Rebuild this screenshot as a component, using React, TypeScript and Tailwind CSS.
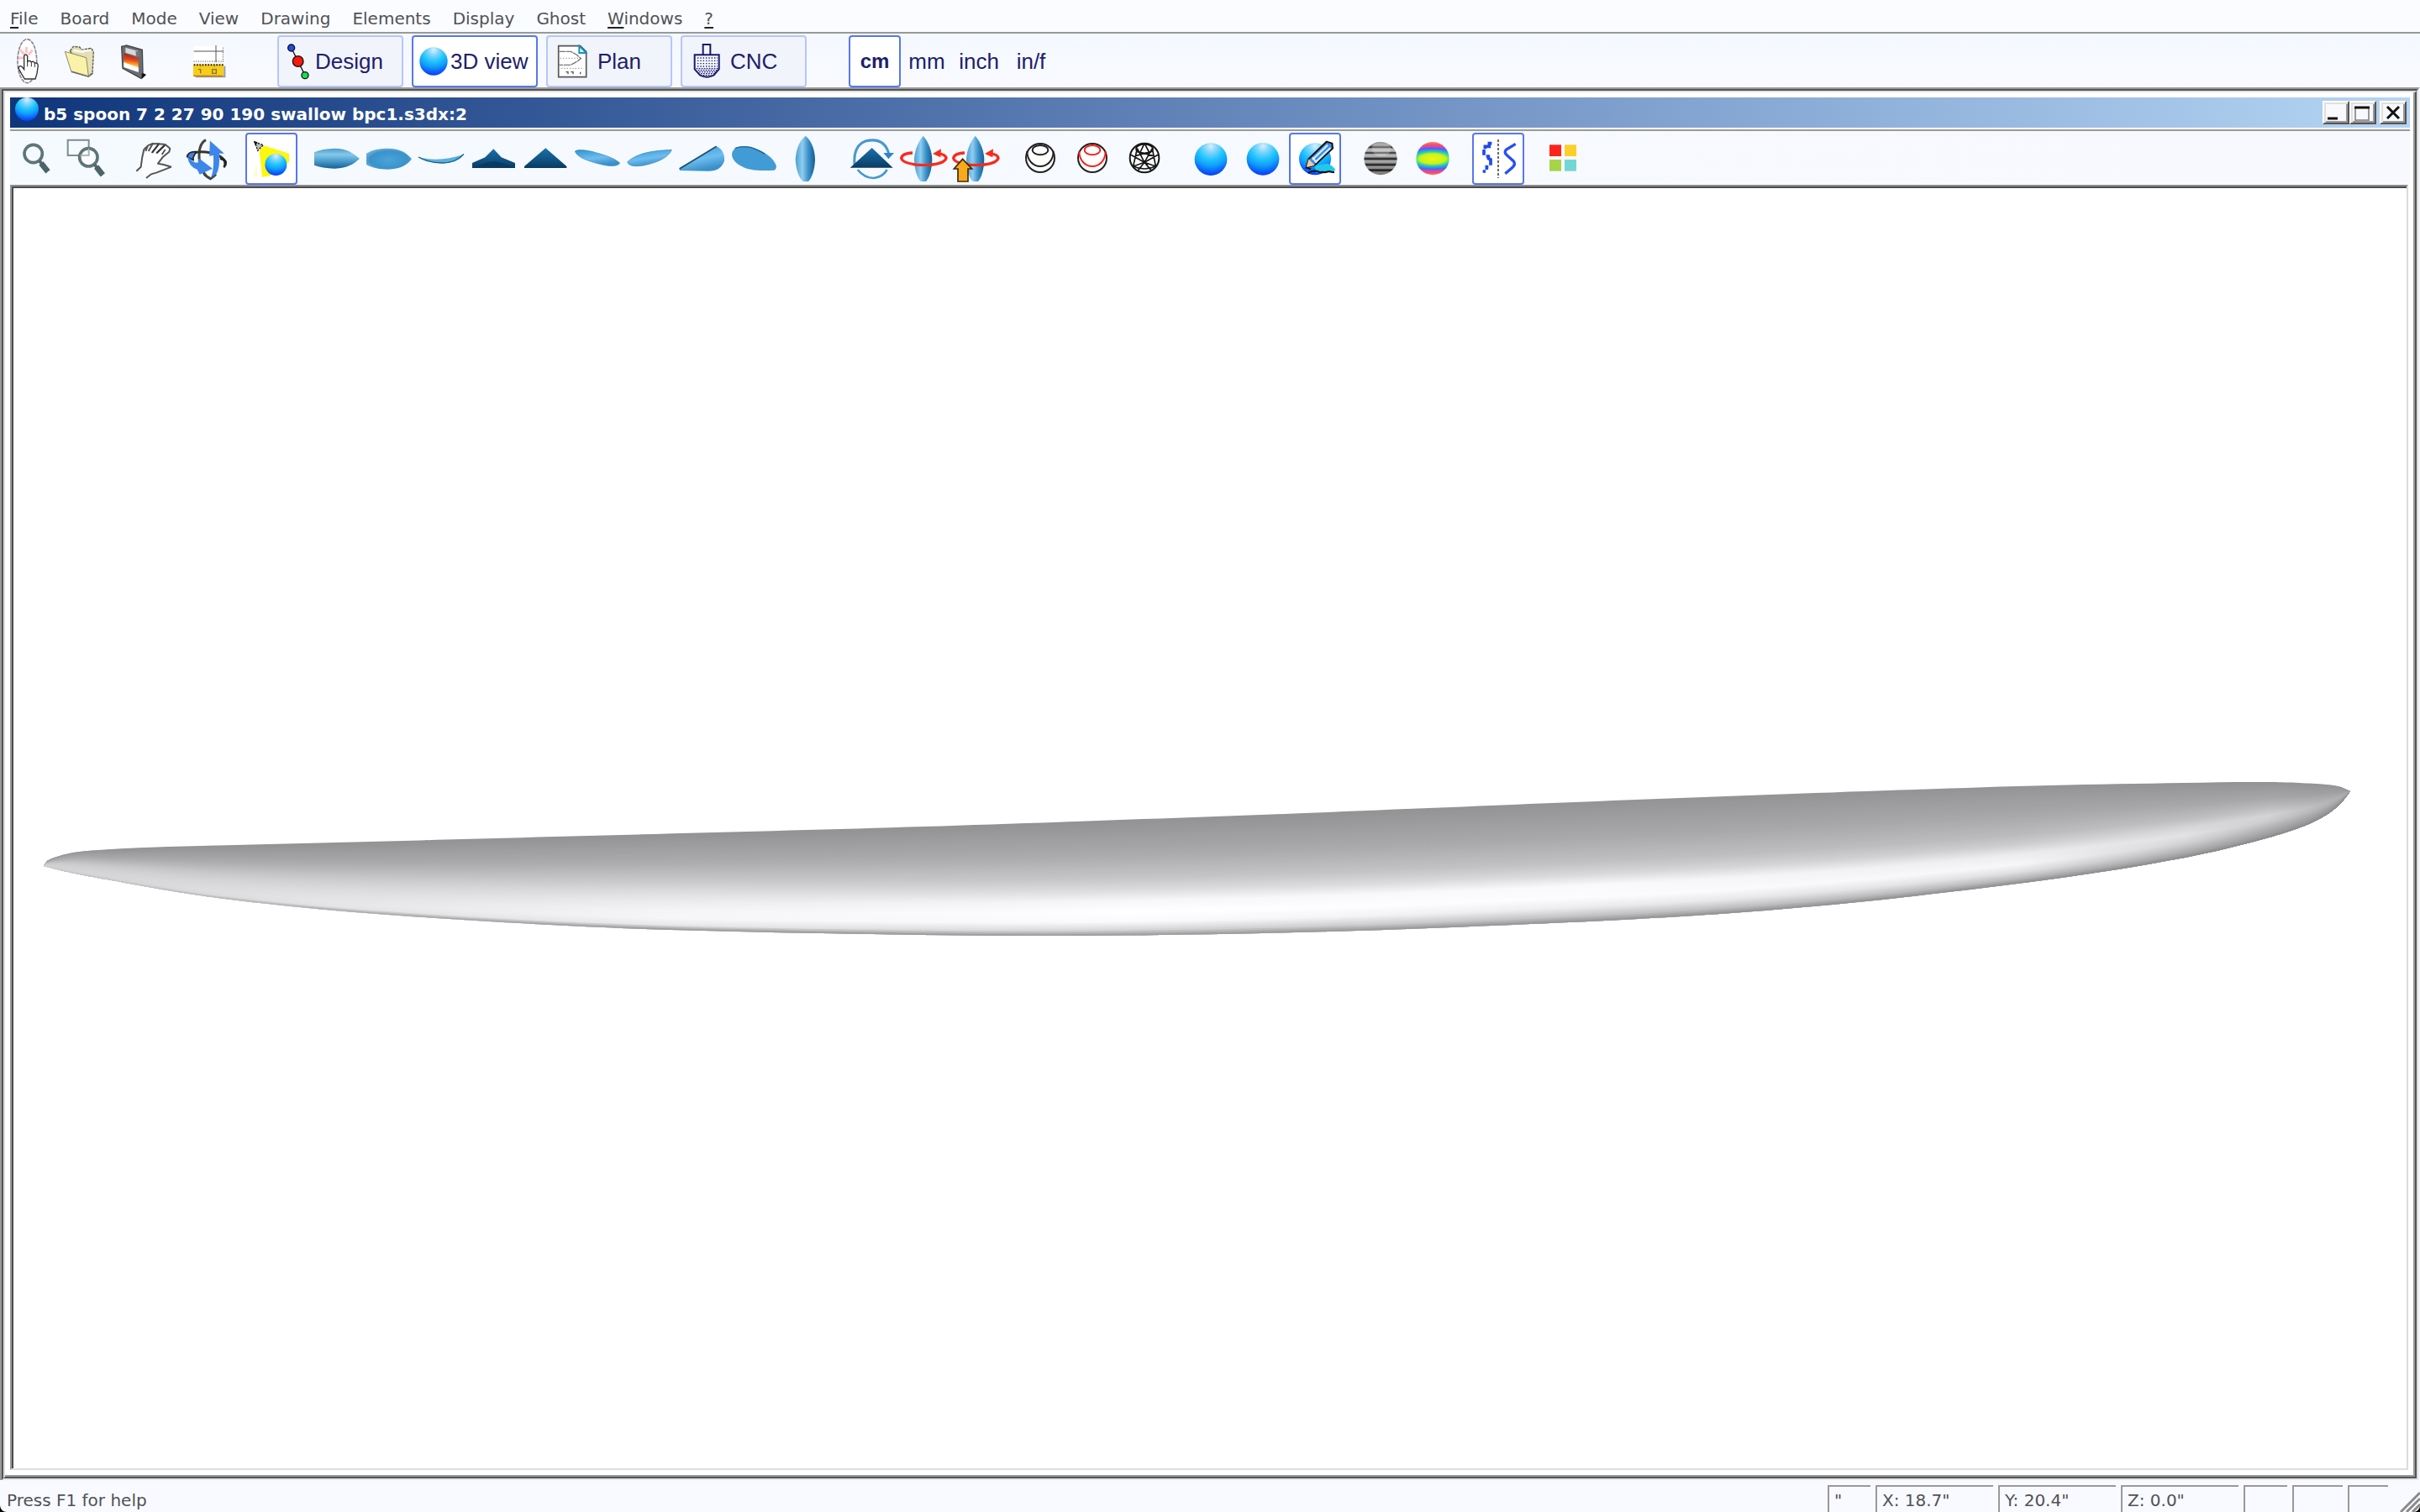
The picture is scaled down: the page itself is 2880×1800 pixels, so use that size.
import type { ReactNode } from 'react';

/* ---------- hull rendering ---------- */

type Pt = [number, number];

const DECK: Pt[] = [
  [52, 1031], [57, 1024], [87, 1015], [133, 1011], [200, 1008], [400, 1003], [700, 995], [1100, 984],
  [1500, 970], [1700, 962], [2000, 950], [2400, 936], [2600, 932], [2700, 931], [2755, 933], [2783, 936], [2797, 942],
];

const BOTTOM: Pt[] = [
  [52, 1031], [60, 1033], [90, 1040], [133, 1048], [200, 1060], [267, 1070], [400, 1084], [600, 1098], [800, 1107],
  [1100, 1113], [1286, 1114], [1500, 1111], [1700, 1105], [2000, 1091], [2200, 1075], [2400, 1052], [2500, 1038],
  [2567, 1027], [2633, 1014], [2700, 997], [2740, 984], [2767, 971], [2785, 957], [2797, 942],
];

// Brightness from the deck (first) down to the bottom rail (last), at several stations along the hull.
const LEVELS = [0, 0.3, 0.5, 0.6, 0.7, 0.8, 0.88, 0.95, 1];
const STATIONS: { x: number; tone: number[] }[] = [
  { x: 52, tone: [150, 180, 200, 205, 208, 210, 210, 205, 190] },
  { x: 133, tone: [146, 170, 195, 204, 210, 213, 214, 212, 190] },
  { x: 400, tone: [146, 170, 198, 210, 220, 227, 230, 228, 165] },
  { x: 800, tone: [146, 172, 202, 220, 235, 245, 246, 232, 145] },
  { x: 1350, tone: [146, 170, 197, 218, 247, 255, 250, 215, 150] },
  { x: 1900, tone: [148, 169, 192, 215, 250, 252, 235, 195, 145] },
  { x: 2400, tone: [148, 168, 187, 205, 236, 247, 225, 185, 140] },
  { x: 2600, tone: [146, 168, 192, 214, 226, 212, 188, 164, 138] },
  { x: 2700, tone: [146, 168, 196, 212, 204, 184, 168, 154, 136] },
  { x: 2797, tone: [148, 158, 168, 170, 166, 158, 150, 144, 138] },
];

function heightAt(line: Pt[], x: number): number {
  const last = line.length - 1;
  let i = 0;
  while (i < last - 1 && x > line[i + 1][0]) i++;
  const slope = (k: number) => {
    const a = line[Math.max(0, k - 1)];
    const b = line[Math.min(last, k + 1)];
    return (b[1] - a[1]) / (b[0] - a[0]);
  };
  const [x0, y0] = line[i];
  const [x1, y1] = line[i + 1];
  const h = x1 - x0;
  const t = Math.min(1, Math.max(0, (x - x0) / h));
  const t2 = t * t;
  const t3 = t2 * t;
  return (
    (2 * t3 - 3 * t2 + 1) * y0 + (t3 - 2 * t2 + t) * h * slope(i) +
    (-2 * t3 + 3 * t2) * y1 + (t3 - t2) * h * slope(i + 1)
  );
}

function toneAt(tone: number[], level: number): number {
  let i = 0;
  while (i < LEVELS.length - 2 && level > LEVELS[i + 1]) i++;
  const f = (level - LEVELS[i]) / (LEVELS[i + 1] - LEVELS[i]);
  return tone[i] + (tone[i + 1] - tone[i]) * f;
}

const XS: number[] = [];
for (let x = 52; x < 2797; x += x < 140 || x > 2680 ? 4 : 20) XS.push(x);
XS.push(2797);

const BANDS = 72;
const UNDERSIDE = [...XS].reverse().map((x) => `${x} ${heightAt(BOTTOM, x).toFixed(1)}`).join('L');

function Hull() {
  const bands = Array.from({ length: BANDS }, (_, i) => i / BANDS);
  return (
    <svg className="block h-full w-full" viewBox="16 224 2848 1524" role="img" aria-label="3D view of the board">
      <defs>
        {bands.map((level, i) => (
          <linearGradient key={i} id={`band${i}`} gradientUnits="userSpaceOnUse" x1="52" x2="2797" y1="0" y2="0">
            {STATIONS.map((s) => {
              const v = Math.round(toneAt(s.tone, level + 0.5 / BANDS));
              return <stop key={s.x} offset={(s.x - 52) / 2745} stopColor={`rgb(${v},${v},${Math.min(255, v + 2)})`} />;
            })}
          </linearGradient>
        ))}
      </defs>
      {bands.map((level, i) => {
        const edge = XS.map((x) => {
          const a = heightAt(DECK, x);
          const b = heightAt(BOTTOM, x);
          return `${x} ${(a + (b - a) * level).toFixed(1)}`;
        }).join('L');
        return <path key={i} d={`M${edge}L${UNDERSIDE}Z`} fill={`url(#band${i})`} />;
      })}
    </svg>
  );
}

/* ---------- icons ---------- */

function Ico({ x, y, children }: { x: number; y: number; children: ReactNode }) {
  return (
    <svg className="size-[62px] shrink-0" viewBox={`${x} ${y} 186 186`} fill="none" aria-hidden="true">
      {children}
    </svg>
  );
}

function SharedPaints() {
  return (
    <svg className="absolute size-0" aria-hidden="true">
      <defs>
        <radialGradient id="ball" cx="0.5" cy="0.1" r="0.92">
          <stop offset="0" stopColor="#d8f0ff" />
          <stop offset="0.2" stopColor="#84d6fc" />
          <stop offset="0.45" stopColor="#20c4fc" />
          <stop offset="0.65" stopColor="#10a0fc" />
          <stop offset="0.85" stopColor="#0a60fb" />
          <stop offset="1" stopColor="#0c34f4" />
        </radialGradient>
        <linearGradient id="boardV" x1="0" y1="0" x2="0" y2="1">
          <stop offset="0" stopColor="#4a9cc8" />
          <stop offset="0.3" stopColor="#86c8ea" />
          <stop offset="0.55" stopColor="#58a8d4" />
          <stop offset="1" stopColor="#14609a" />
        </linearGradient>
        <radialGradient id="boardFlat" cx="0.5" cy="0.55" r="0.6">
          <stop offset="0" stopColor="#4ba3da" />
          <stop offset="0.7" stopColor="#3a92cb" />
          <stop offset="1" stopColor="#7db6dc" />
        </radialGradient>
        <linearGradient id="boardTilt" x1="0" y1="0" x2="0.4" y2="1">
          <stop offset="0" stopColor="#2f93cf" />
          <stop offset="0.6" stopColor="#6dbdf0" />
          <stop offset="1" stopColor="#3a90c8" />
        </linearGradient>
        <linearGradient id="boardH" x1="0" y1="0" x2="1" y2="0">
          <stop offset="0" stopColor="#4d9fd0" />
          <stop offset="0.35" stopColor="#8fcdf2" />
          <stop offset="0.65" stopColor="#3d93c9" />
          <stop offset="1" stopColor="#125d94" />
        </linearGradient>
        <linearGradient id="prow" x1="0" y1="0" x2="0" y2="1">
          <stop offset="0" stopColor="#1a70a8" />
          <stop offset="0.6" stopColor="#0f5283" />
          <stop offset="1" stopColor="#0a3a62" />
        </linearGradient>
        <linearGradient id="zebra" x1="0" y1="0" x2="0" y2="1">
          {[
            [0, '#777'], [0.1, '#999'], [0.16, '#222'], [0.2, '#aaa'], [0.28, '#bbb'], [0.33, '#222'], [0.38, '#bbb'],
            [0.45, '#aaa'], [0.51, '#111'], [0.57, '#aaa'], [0.63, '#999'], [0.69, '#111'], [0.75, '#999'],
            [0.8, '#888'], [0.85, '#111'], [0.92, '#888'], [1, '#777'],
          ].map(([o, c]) => <stop key={o} offset={o} stopColor={String(c)} />)}
        </linearGradient>
        <radialGradient id="rainbow" gradientUnits="userSpaceOnUse" cx="0" cy="0" r="60" gradientTransform="translate(795 267) scale(2.6 1)">
          <stop offset="0" stopColor="#f4f410" />
          <stop offset="0.3" stopColor="#c4f418" />
          <stop offset="0.4" stopColor="#40dc80" />
          <stop offset="0.5" stopColor="#20a8f0" />
          <stop offset="0.62" stopColor="#5060f0" />
          <stop offset="0.72" stopColor="#d048b8" />
          <stop offset="0.82" stopColor="#fa4868" />
          <stop offset="1" stopColor="#fc8468" />
        </radialGradient>
        <linearGradient id="flame" x1="0.2" y1="0" x2="0.1" y2="1">
          <stop offset="0" stopColor="#a02010" />
          <stop offset="0.35" stopColor="#e8481c" />
          <stop offset="0.6" stopColor="#ffb030" />
          <stop offset="0.8" stopColor="#fff" />
        </linearGradient>
      </defs>
    </svg>
  );
}

const Ball = ({ cx, cy, r = 58 }: { cx: number; cy: number; r?: number }) => <circle cx={cx} cy={cy} r={r} fill="url(#ball)" />;

const NewIcon = (
  <Ico x={3} y={126}>
    <ellipse cx="97" cy="218" rx="34" ry="78" fill="#fff" stroke="#8a8a8a" strokeWidth="5" strokeDasharray="14 3" />
    <path d="M94 168V190M72 178L88 196M116 178L102 196M66 208L84 206" stroke="#fbc4c8" strokeWidth="9" />
    <path d="M86 238V200Q92 190 98 200V220Q106 214 112 222Q120 216 124 226Q134 222 136 234L132 262L126 282H88L76 262L66 244Q68 232 78 238L86 248Z" fill="#fff" stroke="#333" strokeWidth="4" />
    <path d="M98 222V238M112 224V238M124 228V240" stroke="#333" strokeWidth="3" />
  </Ico>
);

const OpenIcon = (
  <Ico x={189} y={126}>
    <path d="M250 182L262 166L284 168L292 178L326 172L334 186L330 262L316 270Z" fill="#e4e0b4" stroke="#5a5a52" strokeWidth="4" strokeDasharray="10 3" />
    <path d="M262 180L300 186M290 182L326 180" stroke="#fff" strokeWidth="6" />
    <path d="M232 184L308 206L316 272L254 254Z" fill="#faf2a8" stroke="#8a8a72" strokeWidth="3" />
    <path d="M254 256L316 274L332 262" stroke="#666" strokeWidth="4" />
  </Ico>
);

const SaveIcon = (
  <Ico x={375} y={126}>
    <path d="M434 166L452 162L508 178L510 262L518 268L504 280L438 244Z" fill="#6a6d72" stroke="#44464a" strokeWidth="4" />
    <path d="M448 170L492 182V202L448 188Z" fill="#d6d8da" />
    <path d="M484 182L498 186V202L486 200Z" fill="#777" />
    <path d="M442 190L494 208V254L442 236Z" fill="url(#flame)" />
    <path d="M442 222L494 242V258L442 240Z" fill="#fff" />
    <path d="M506 262L522 266L506 282Z" fill="#111" />
  </Ico>
);

const MeasureIcon = (
  <Ico x={651} y={126}>
    <path d="M692 166H796V218H692Z" fill="#fff" />
    <path d="M692 183H798M771 162V222" stroke="#555" strokeWidth="3" />
    <path d="M796 170V220M692 219H798" stroke="#444" strokeWidth="3" strokeDasharray="3 5" />
    <path d="M698 274H802V236" stroke="#9a9a9a" strokeWidth="6" />
    <rect x="690" y="230" width="108" height="42" fill="#f8cc1c" />
    <path d="M692 232H798" stroke="#222" strokeWidth="6" strokeDasharray="5 5" />
    <path d="M716 262V248H708M716 230V238M766 230V238M758 248H772V262H758Z" stroke="#8a7420" strokeWidth="4" />
    <path d="M690 271H796" stroke="#b07c10" strokeWidth="4" />
  </Ico>
);

const DesignIcon = (
  <svg className="h-11 w-7" viewBox="1024 152 84 132" fill="none" aria-hidden="true">
    <path d="M1041 170L1090 268" stroke="#111" strokeWidth="4" />
    <circle cx="1041" cy="170" r="12" fill="#1f4cf0" stroke="#111" strokeWidth="4" />
    <circle cx="1065" cy="218" r="19" fill="#f8180c" stroke="#111" strokeWidth="4" />
    <circle cx="1090" cy="268" r="12" fill="#18e050" stroke="#111" strokeWidth="4" />
  </svg>
);

const SphereIcon = (
  <svg className="size-9" viewBox="54 164 108 108" aria-hidden="true">
    <Ball cx={108} cy={218} r={50} />
  </svg>
);

const PlanIcon = (
  <svg className="h-10 w-9" viewBox="549 158 108 120" fill="none" aria-hidden="true">
    <path d="M554 163H632L653 184V274H554Z" fill="#fff" stroke="#555" strokeWidth="5" />
    <path d="M628 163V188H653Z" fill="#e8fbff" stroke="#1494b8" strokeWidth="6" />
    <path d="M556 183H598L618 194L634 208L618 220L598 231H556" stroke="#777" strokeWidth="4" strokeDasharray="24 2" />
    <path d="M560 207H634M564 243H644" stroke="#888" strokeWidth="3" strokeDasharray="4 6" />
    <path d="M580 256H588V264M598 256H606V264M632 256V264" stroke="#555" strokeWidth="4" />
  </svg>
);

const CncIcon = (
  <svg className="h-11 w-8" viewBox="1035 152 96 132" fill="none" aria-hidden="true">
    <path d="M1070 194V158H1096V194M1040 195H1127V246L1108 268Q1084 280 1060 268L1040 246Z" fill="#f4f5fb" stroke="#1a1a6c" strokeWidth="6" />
    <path d="M1050 206H1122M1050 216H1122M1050 226H1122M1050 236H1122" stroke="#1a1a6c" strokeWidth="4" strokeDasharray="4 6" />
    <path d="M1046 244H1124M1052 250H1120M1056 256H1116M1062 262H1110M1070 268H1100" stroke="#1a1a6c" strokeWidth="4" strokeDasharray="5 4" />
  </svg>
);

const ZoomIcon = (
  <Ico x={36} y={474}>
    <circle cx="119" cy="549" r="32" stroke="#5f7578" strokeWidth="11" />
    <path d="M140 574L150 586" stroke="#55696d" strokeWidth="12" />
    <path d="M147 583L171 613" stroke="#4c6368" strokeWidth="20" />
  </Ico>
);

const ZoomBoxIcon = (
  <Ico x={222} y={474}>
    <path d="M242 500H317V555H242Z" stroke="#7c8d90" strokeWidth="6" />
    <circle cx="316" cy="562" r="32" fill="#fff" fillOpacity="0.6" stroke="#5f7578" strokeWidth="11" />
    <path d="M317 530V555H286" stroke="#a7b3b5" strokeWidth="5" />
    <path d="M337 587L347 599" stroke="#55696d" strokeWidth="12" />
    <path d="M344 596L367 625" stroke="#4c6368" strokeWidth="20" />
  </Ico>
);

const HandIcon = (
  <Ico x={456} y={474}>
    <path
      d="M487 611L503 598L512 560L514 534L528 520L546 512L568 514L590 516L606 528L604 542L584 566L566 586L612 596L560 616L540 622L522 636L506 620L503 598Z"
      fill="#fcfdff"
    />
    <path
      d="M487 611L503 596L508 560L514 534L528 520L520 540M528 520L546 512L530 540M546 514L568 513L544 544M568 514L590 516L558 548M590 516L607 530L604 542L582 560L564 584L584 588L612 596M612 596L560 616L540 622L522 636"
      stroke="#555" strokeWidth="6" strokeLinejoin="round"
    />
    <path d="M566 516L542 546M588 519L560 546" stroke="#333" strokeWidth="6" />
    <path d="M590 534L578 552" stroke="#444" strokeWidth="5" />
  </Ico>
);

const OrbitIcon = (
  <Ico x={642} y={474}>
    <path d="M735 500Q706 515 712 575Q720 625 752 638" stroke="#444" strokeWidth="9" />
    <path d="M672 562Q690 535 750 545Q810 560 804 592" stroke="#333" strokeWidth="9" />
    <path d="M668 560Q672 540 700 542L690 562L690 572Z" fill="#3d82e4" stroke="#222" strokeWidth="5" />
    <path d="M672 562Q684 584 708 584L712 570L754 602L714 620L706 604Q678 594 672 562Z" fill="#3d86ea" stroke="#3d86ea" strokeWidth="5" />
    <path d="M752 508L794 546H780Q786 620 754 638Q768 608 764 552L750 554Z" fill="#3d86ea" stroke="#3d86ea" strokeWidth="5" />
    <path d="M728 624L752 640L772 624" stroke="#444" strokeWidth="6" />
    <path d="M786 566Q804 570 806 580L800 598" stroke="#222" strokeWidth="8" />
  </Ico>
);

const LightIcon = (
  <Ico x={876} y={474}>
    <path d="M926 538L942 520L1032 548V578L964 628L936 632Z" fill="#fdf70c" />
    <path d="M902 632L916 590L920 628Z" fill="#fefcd0" />
    <path d="M910 508L940 518L920 538Z" fill="#bbb" stroke="#111" strokeWidth="4" strokeDasharray="7 4" />
    <path d="M905 503L920 508L912 520Z" fill="#111" />
    <Ball cx={985} cy={588} r={39} />
  </Ico>
);

const BoardIcons = [
  { name: 'Deck view', x: 1110, art: <path d="M1122 544Q1150 531 1195 530C1240 530 1262 548 1284 567C1262 586 1240 601 1195 602Q1150 600 1122 590Z" fill="url(#boardV)" /> },
  { name: 'Bottom view', x: 1296, art: <path d="M1308 548C1330 534 1355 530 1385 530C1430 530 1455 548 1470 568C1455 588 1430 605 1385 605C1355 605 1330 600 1308 588Z" fill="url(#boardFlat)" /> },
  {
    name: 'Side view', x: 42,
    art: (
      <g>
        <path d="M54 560Q90 572 140 568Q190 562 216 550Q200 582 140 583Q84 582 54 562Z" fill="#58b0e2" />
        <path d="M54 561Q90 582 140 582Q190 580 216 550" stroke="#1c5f80" strokeWidth="4" />
      </g>
    ),
  },
  {
    name: 'Nose view', x: 228,
    art: (
      <g>
        <path d="M246 582L292 562L322 532L350 562L399 582V600H246Z" fill="url(#prow)" />
        <path d="M246 600L300 580Q322 574 346 580L399 600Z" fill="#0a3a62" />
      </g>
    ),
  },
  { name: 'Tail view', x: 414, art: <path d="M432 594L508 529L583 594V600H432Z" fill="url(#prow)" /> },
  {
    name: 'Perspective 1', x: 600,
    art: <path d="M613 540C625 532 660 536 690 546C730 556 760 570 773 582C765 596 735 594 710 588C660 576 620 562 613 540Z" fill="url(#boardTilt)" stroke="#3a86b4" strokeWidth="2" />,
  },
  {
    name: 'Perspective 2', x: 786,
    art: <path d="M800 578C835 546 890 538 958 535C950 558 915 578 870 588C840 596 804 596 800 578Z" fill="url(#boardTilt)" stroke="#3a86b4" strokeWidth="2" />,
  },
  {
    name: 'Perspective 3', x: 972,
    art: (
      <g>
        <path d="M986 609V599L1118 523C1138 532 1148 550 1146 575C1136 600 1118 611 1090 611Z" fill="url(#boardTilt)" />
        <path d="M986 603L1118 523" stroke="#1d4f70" strokeWidth="5" />
      </g>
    ),
  },
  {
    name: 'Perspective 4', x: 1158,
    art: (
      <g>
        <path d="M1174 545C1182 520 1214 520 1246 527C1290 538 1322 566 1331 590Q1334 602 1324 608C1270 611 1230 608 1208 594C1180 580 1170 560 1174 545Z" fill="#439bd6" />
        <path d="M1184 530Q1206 520 1240 526Q1270 536 1290 550" stroke="#1d6390" strokeWidth="4" />
      </g>
    ),
  },
  { name: 'Vertical view', x: 1344, art: <path d="M1436 485C1460 505 1470 540 1470 572C1468 610 1458 634 1446 648H1427C1412 634 1402 606 1400 570C1402 535 1412 505 1436 485Z" fill="url(#boardH)" /> },
];

const AutoRotateIcon = (
  <Ico x={138} y={474}>
    <path d="M171 588Q166 520 210 504Q276 488 293 548" stroke="#4798cf" strokeWidth="9" />
    <path d="M182 606Q206 636 240 636Q272 632 287 606" stroke="#4798cf" strokeWidth="8" />
    <path d="M274 546L312 546L292 568Z" fill="#2f86c4" />
    <path d="M155 599L233 528L308 599Z" fill="url(#prow)" />
  </Ico>
);

const SpinArt = (
  <g>
    <path d="M466 547Q498 552 498 565Q490 588 418 590Q344 586 338 565Q340 548 378 546" stroke="#fa2a1c" strokeWidth="10" />
    <path d="M416 485C436 508 447 540 448 570C447 606 438 634 426 648H407C394 634 385 606 384 570C385 540 396 508 416 485Z" fill="url(#boardH)" />
    <path d="M382 587Q418 592 452 587" stroke="#fa2a1c" strokeWidth="9" />
    <path d="M450 549L480 532L478 562Z" fill="#fa2a1c" />
  </g>
);

const SpinIcon = <Ico x={324} y={474}>{SpinArt}</Ico>;

const SpinUpIcon = (
  <Ico x={324} y={474}>
    {SpinArt}
    <path d="M371 568L404 603H390V648H354V603H340Z" fill="#f9a91c" stroke="#3b2a08" strokeWidth="5" />
  </Ico>
);

const RingIcon = (x: number, cx: number, color: string) => (
  <Ico x={x} y={474}>
    <circle cx={cx} cy="564" r="51" fill="#fff" stroke="#222" strokeWidth="6" />
    <ellipse cx={cx} cy="536" rx="28" ry="17" stroke={color} strokeWidth="6" />
    <path d={`M${cx - 47} 540C${cx - 46} 612 ${cx + 46} 612 ${cx + 47} 540`} stroke={color} strokeWidth="6" />
  </Ico>
);

const MeshIcon = (
  <Ico x={1116} y={474}>
    <circle cx="1206" cy="564" r="52" fill="#fff" stroke="#161616" strokeWidth="6" />
    <ellipse cx="1206" cy="532" rx="30" ry="16" stroke="#161616" strokeWidth="5" />
    <path d="M1156 552L1206 580L1256 552M1180 530L1206 580L1234 530M1166 594L1206 580L1246 594M1182 610L1206 580L1232 610M1166 594Q1206 612 1246 594M1180 530L1166 594M1234 530L1246 594M1176 540L1236 556M1236 540L1176 556M1206 512L1190 546M1206 512L1224 546" stroke="#161616" strokeWidth="5" />
  </Ico>
);

const PaintIcon = (
  <Ico x={282} y={174}>
    <Ball cx={375} cy={268} r={57} />
    <path d="M372 290L420 284Q440 292 448 306L436 318L400 310L380 318Z" fill="#20c8ea" />
    <path d="M350 318Q370 306 390 314Q410 318 424 312L444 316" stroke="#111" strokeWidth="6" />
    <path d="M352 268L416 206L436 212L438 230L374 290L344 298Z" fill="#3a8ee8" stroke="#111" strokeWidth="6" />
    <path d="M366 270L420 218M376 280L430 228" stroke="#d4ecff" strokeWidth="7" />
    <path d="M352 268L374 290L344 298Z" fill="#f6c8a0" />
    <path d="M366 262L380 280" stroke="#eee" strokeWidth="6" />
    <path d="M344 298L360 304" stroke="#111" strokeWidth="6" />
  </Ico>
);

const ZebraIcon = (
  <Ico x={516} y={174}>
    <circle cx="609" cy="266" r="59" fill="url(#zebra)" />
    <ellipse cx="612" cy="232" rx="34" ry="26" fill="#fff" fillOpacity="0.25" />
  </Ico>
);

const RainbowIcon = (
  <Ico x={702} y={174}>
    <circle cx="795" cy="266" r="59" fill="url(#rainbow)" />
  </Ico>
);

const SymmetryIcon = (
  <Ico x={936} y={174}>
    <path d="M1006 212H997V223H982V232M978 234V254M986 258H994V266L1002 270V290M994 296H988V306M984 312H974" stroke="#1f48f0" strokeWidth="11" />
    <path d="M1029 198V336" stroke="#222" strokeWidth="4" strokeDasharray="9 6" />
    <path d="M1091 214L1058 234Q1048 244 1060 254L1084 276Q1092 286 1080 298L1054 320" stroke="#2450f4" strokeWidth="10" />
  </Ico>
);

const ColorsIcon = (
  <Ico x={1170} y={174}>
    <rect x="1212" y="217" width="42" height="41" fill="#fb241c" />
    <rect x="1266" y="217" width="42" height="41" fill="#fcd028" />
    <rect x="1212" y="270" width="42" height="41" fill="#a8d448" />
    <rect x="1266" y="270" width="42" height="41" fill="#74d6d4" />
  </Ico>
);

/* ---------- controls ---------- */

const ACTIVE = 'border-[#5877ee] bg-white';

function Tool({ label, on = false, children }: { label: string; on?: boolean; children: ReactNode }) {
  return (
    <button
      type="button"
      aria-label={label}
      aria-pressed={on}
      className={`flex size-[62px] shrink-0 items-center justify-center rounded-sm border-2 ${on ? ACTIVE : 'border-transparent'}`}
    >
      {children}
    </button>
  );
}

function Mode({ label, on = false, pad, children }: { label: string; on?: boolean; pad: string; children: ReactNode }) {
  return (
    <button
      type="button"
      aria-pressed={on}
      className={`flex h-[62px] w-[150px] shrink-0 items-center rounded-sm border-2 text-[26px] text-[#20206c] ${pad} ${on ? ACTIVE : 'border-[#b6c6fb] bg-[#f1f4fa]'}`}
    >
      {children}
      {label}
    </button>
  );
}

const MENUS = ['&File', 'Board', 'Mode', 'View', 'Drawing', 'Elements', 'Display', 'Ghost', '&Windows', '&?'];
const UNITS = ['cm', 'mm', 'inch', 'in/f'];
const FIELDS = [
  { text: '"', width: 'w-[51px]' },
  { text: 'X: 18.7"', width: 'w-[140px]' },
  { text: 'Y: 20.4"', width: 'w-[140px]' },
  { text: 'Z: 0.0"', width: 'w-[140px]' },
  { text: '', width: 'w-[52px]' },
  { text: '', width: 'w-[60px]' },
  { text: '', width: 'w-[48px]' },
];

function CaptionButton({ label, children }: { label: string; children: ReactNode }) {
  return (
    <button
      type="button"
      aria-label={label}
      className="h-7 w-8 border-2 border-t-white border-r-[#555] border-b-[#555] border-l-white bg-[#f8f9fd] shadow-[inset_2px_2px_0_#e4dfd8,inset_-2px_-2px_0_#999]"
    >
      <svg className="size-full" viewBox="0 0 28 24" fill="none" aria-hidden="true">
        {children}
      </svg>
    </button>
  );
}

export default function App() {
  return (
    <div className="h-screen bg-black">
      <SharedPaints />
      <div className="flex h-full flex-col overflow-hidden rounded-b-lg bg-[#f9faff] font-['DejaVu_Sans',sans-serif] text-xl text-[#505256]">
        <nav className="flex h-10 shrink-0 items-center gap-[26px] border-b-2 border-[#999] bg-[#fafcff] pt-1.5 pl-3">
          {MENUS.map((m) => (
            <button key={m} type="button" className="leading-6">
              {m[0] === '&' ? (
                <>
                  <span className="underline decoration-[#222] decoration-2 underline-offset-3">{m[1]}</span>
                  {m.slice(2)}
                </>
              ) : (
                m
              )}
            </button>
          ))}
        </nav>

        <div className="flex h-16 shrink-0 items-center bg-gradient-to-b from-[#f4f9ff] to-[#f9faff] pt-0.5 pl-px font-['Liberation_Sans',sans-serif]">
          <Tool label="New board">{NewIcon}</Tool>
          <Tool label="Open">{OpenIcon}</Tool>
          <Tool label="Save">{SaveIcon}</Tool>
          <div className="mr-[51px] ml-[30px]">
            <Tool label="Measure">{MeasureIcon}</Tool>
          </div>
          <div className="mr-[50px] flex gap-2.5">
            <Mode label="Design" pad="gap-1.5 pl-[9px]">{DesignIcon}</Mode>
            <Mode label="3D view" on pad="gap-0.5 pl-1.5">{SphereIcon}</Mode>
            <Mode label="Plan" pad="gap-3 pl-[11px]">{PlanIcon}</Mode>
            <Mode label="CNC" pad="gap-3 pl-[13px]">{CncIcon}</Mode>
          </div>
          {UNITS.map((u, i) => (
            <button
              key={u}
              type="button"
              aria-pressed={i === 0}
              className={`size-[62px] shrink-0 rounded-sm border-2 text-[#20206c] ${i === 0 ? `${ACTIVE} text-2xl font-bold` : 'border-transparent text-[26px]'}`}
            >
              {u}
            </button>
          ))}
        </div>

        {/* document window, drawn with classic double bevels */}
        <section className="flex min-h-0 flex-1 flex-col border-2 border-b-0 border-[#999] border-r-[#f4f6fc]">
          <div className="flex min-h-0 flex-1 flex-col border-2 border-t-[#555] border-r-[#dcdcdc] border-b-[#e4e6e2] border-l-[#555]">
            <div className="flex min-h-0 flex-1 flex-col border-2 border-t-[#e6e4e2] border-r-[#555] border-b-[#555] border-l-[#dcdcdc]">
              <div className="flex min-h-0 flex-1 flex-col border-r-2 border-b-2 border-[#999] bg-white py-1.5 pr-1 pl-1.5">
                <header className="flex h-9 shrink-0 items-center bg-gradient-to-r from-[#0f357b] via-[#6485ba] to-[#b5d5f3] px-1 text-white">
                  <svg className="size-8 shrink-0 self-start" viewBox="48 348 96 96" aria-hidden="true">
                    <Ball cx={96} cy={390} r={42} />
                  </svg>
                  <h1 className="ml-1 flex-1 pt-1 font-bold">b5 spoon 7 2 27 90 190 swallow bpc1.s3dx:2</h1>
                  <CaptionButton label="Minimize">
                    <path d="M4 19H16" stroke="#111" strokeWidth="3" />
                  </CaptionButton>
                  <CaptionButton label="Maximize">
                    <path d="M5 7V21H21V7" stroke="#999" strokeWidth="2" />
                    <path d="M4 6H22" stroke="#111" strokeWidth="3" />
                  </CaptionButton>
                  <div className="ml-1 flex">
                    <CaptionButton label="Close">
                      <path d="M7 5L21 19M21 5L7 19" stroke="#111" strokeWidth="3" />
                    </CaptionButton>
                  </div>
                </header>

                <div className="mt-0.5 flex h-[66px] shrink-0 items-center gap-4 border-t-2 border-[#999] bg-gradient-to-r from-[#f5faff] to-[#f8f9ff] pt-0.5">
                  <div className="flex">
                    <Tool label="Zoom">{ZoomIcon}</Tool>
                    <Tool label="Zoom window">{ZoomBoxIcon}</Tool>
                  </div>
                  <div className="flex">
                    <Tool label="Pan">{HandIcon}</Tool>
                    <Tool label="Orbit">{OrbitIcon}</Tool>
                  </div>
                  <Tool label="Light" on>{LightIcon}</Tool>
                  <div className="flex">
                    {BoardIcons.map((b) => (
                      <Tool key={b.name} label={b.name}>
                        <Ico x={b.x} y={474}>{b.art}</Ico>
                      </Tool>
                    ))}
                  </div>
                  <div className="flex">
                    <Tool label="Rotate around length">{AutoRotateIcon}</Tool>
                    <Tool label="Spin">{SpinIcon}</Tool>
                    <Tool label="Spin upright">{SpinUpIcon}</Tool>
                  </div>
                  <div className="flex">
                    <Tool label="Slices">{RingIcon(744, 834, '#222')}</Tool>
                    <Tool label="Colored slices">{RingIcon(930, 1020, '#f82020')}</Tool>
                    <Tool label="Mesh">{MeshIcon}</Tool>
                  </div>
                  <div className="flex">
                    <Tool label="Flat shading"><Ico x={1350} y={474}><Ball cx={1443} cy={569} /></Ico></Tool>
                    <Tool label="Smooth shading"><Ico x={96} y={174}><Ball cx={189} cy={268} /></Ico></Tool>
                    <Tool label="Paint" on>{PaintIcon}</Tool>
                  </div>
                  <div className="flex">
                    <Tool label="Zebra">{ZebraIcon}</Tool>
                    <Tool label="Curvature colors">{RainbowIcon}</Tool>
                  </div>
                  <Tool label="Symmetry" on>{SymmetryIcon}</Tool>
                  <Tool label="Colors">{ColorsIcon}</Tool>
                </div>

                <main className="mr-0.5 min-h-0 flex-1 border-2 border-t-[#8c8c8c] border-r-[#dedad6] border-b-[#dedede] border-l-[#999]">
                  <div className="h-full border-t-2 border-l-2 border-[#4c4c4c]">
                    <Hull />
                  </div>
                </main>
              </div>
            </div>
          </div>
        </section>

        <footer className="flex h-[38px] shrink-0 items-end pl-2">
          <p className="flex-1 leading-7">Press F1 for help</p>
          <div className="flex gap-1.5">
            {FIELDS.map((f, i) => (
              <span key={i} className={`h-8 border-t-2 border-l-2 border-[#999] pt-0.5 pl-1.5 leading-7 ${f.width}`}>
                {f.text}
              </span>
            ))}
          </div>
          <svg className="ml-3.5 h-6 w-6" viewBox="0 0 24 24" fill="none" aria-hidden="true">
            <path d="M1 24L24 1M8 24L24 8M15 24L24 15" stroke="#8a8a8a" strokeWidth="3" />
          </svg>
        </footer>
      </div>
    </div>
  );
}
